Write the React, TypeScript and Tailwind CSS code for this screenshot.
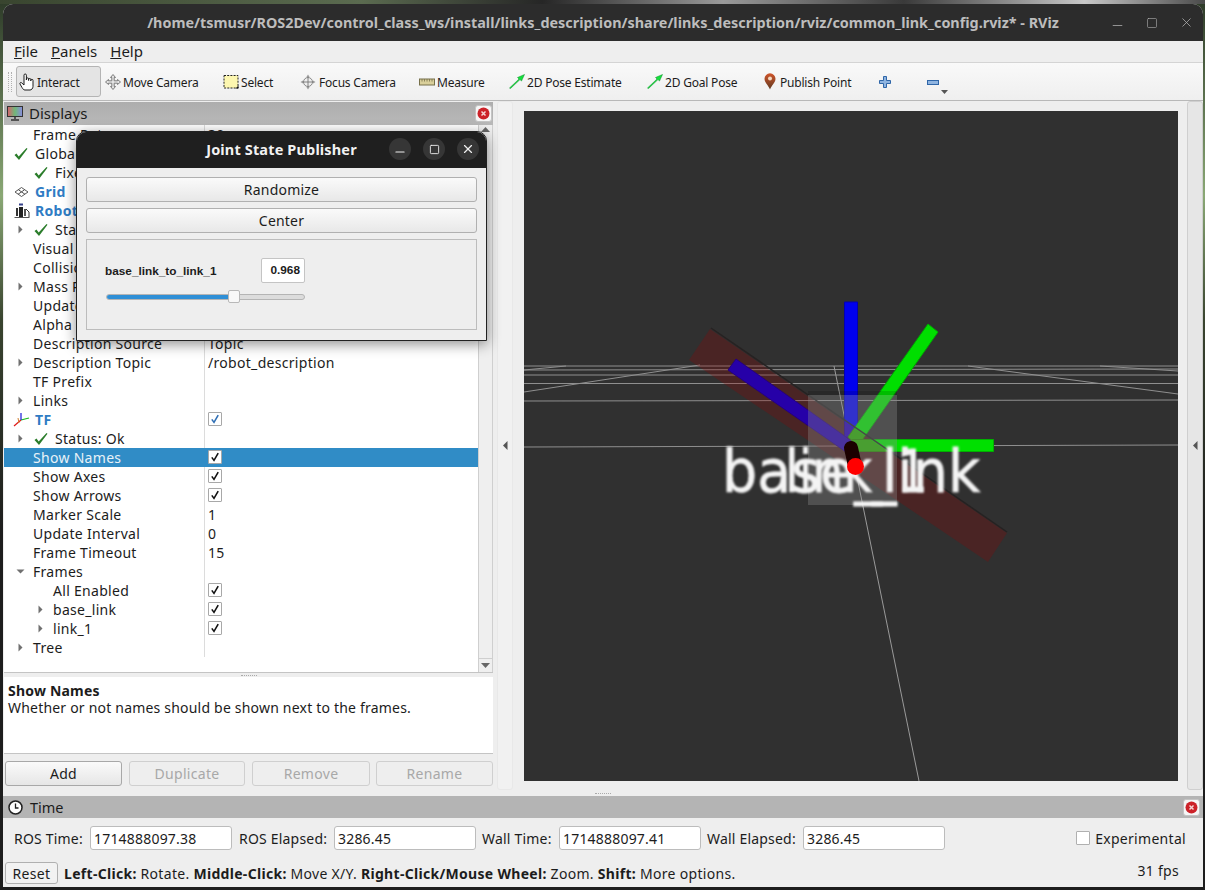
import type { ReactNode } from "react";
import { Minus, Square, X } from "lucide-react";

const ui = "font-['Noto_Sans',sans-serif]";

const Arrow = ({ down = false }: { down?: boolean }) => (
  <svg width="9" height="9" viewBox="0 0 9 9" className="shrink-0">
    {down ? <path d="M0.5 2.5h8l-4 4z" fill="#707070" /> : <path d="M2.5 0.5v8l4-4z" fill="#707070" />}
  </svg>
);

const GreenCheck = () => (
  <svg width="14" height="14" viewBox="0 0 14 14" className="shrink-0">
    <path d="M0.5 8l2-1.5 2.2 3L12.5 1l1 .8L5 13z" fill="#2b7d2b" />
  </svg>
);

const Box = ({ color = "#111111" }: { color?: string }) => (
  <span className="mb-[1px] flex h-[14px] w-[14px] items-center justify-center rounded-[1px] border border-[#a8a8a8] bg-white">
    <svg width="10" height="10" viewBox="0 0 10 10">
      <path d="M1.8 5.4l2.2 3L8.2 1.2" fill="none" stroke={color} strokeWidth="1.6" />
    </svg>
  </span>
);

const GridIcon = () => (
  <svg width="15" height="12" viewBox="0 0 15 12" className="shrink-0">
    <path d="M7.5 1.5L14 6l-6.5 4.5L1 6zM4.5 3.8l6.5 4.5M10.5 3.8L4 8.3" fill="none" stroke="#555" strokeWidth="1" />
  </svg>
);

const RobotIcon = () => (
  <svg width="16" height="15" viewBox="0 0 16 15" className="shrink-0">
    <rect x="5" y="0.5" width="4" height="2" fill="#35408a" />
    <rect x="2" y="5" width="2" height="8" fill="#333" />
    <rect x="5" y="4" width="4" height="10" fill="#222" />
    <rect x="10" y="6" width="2" height="7" fill="#555" />
    <path d="M0.5 14.5h15" stroke="#555" strokeWidth="1" />
    <path d="M12 6l3 3v5" fill="none" stroke="#333" strokeWidth="1" />
  </svg>
);

const TfIcon = () => (
  <svg width="17" height="15" viewBox="0 0 17 15" className="shrink-0">
    <path d="M8 8L1 14" stroke="#e01818" strokeWidth="1.2" />
    <path d="M8 8L16 6" stroke="#18b818" strokeWidth="1.2" />
    <path d="M8 8V1" stroke="#1818d8" strokeWidth="1.2" />
    <path d="M5 6l1 5" stroke="#d08030" strokeWidth="1" />
  </svg>
);

type Row = {
  name: string;
  value?: string;
  pad: string;
  arrow?: "right" | "down";
  check?: boolean;
  icon?: "grid" | "robot" | "tf";
  box?: "black" | "blue";
  head?: boolean;
  selected?: boolean;
};

const rows: Row[] = [
  { name: "Frame Rate", value: "30", pad: "pl-[29px]" },
  { name: "Global Options", pad: "pl-[10px]", check: true },
  { name: "Fixed Frame", value: "map", pad: "pl-[30px]", check: true },
  { name: "Grid", pad: "pl-[10px]", icon: "grid", head: true },
  { name: "RobotModel", pad: "pl-[10px]", icon: "robot", head: true },
  { name: "Status: Ok", pad: "pl-[12px]", arrow: "right", check: true },
  { name: "Visual Enabled", pad: "pl-[29px]" },
  { name: "Collision Enabled", pad: "pl-[29px]" },
  { name: "Mass Properties", pad: "pl-[12px]", arrow: "right" },
  { name: "Update Interval", value: "0", pad: "pl-[29px]" },
  { name: "Alpha", value: "1", pad: "pl-[29px]" },
  { name: "Description Source", value: "Topic", pad: "pl-[29px]" },
  { name: "Description Topic", value: "/robot_description", pad: "pl-[12px]", arrow: "right" },
  { name: "TF Prefix", pad: "pl-[29px]" },
  { name: "Links", pad: "pl-[12px]", arrow: "right" },
  { name: "TF", pad: "pl-[9px]", icon: "tf", head: true, box: "blue" },
  { name: "Status: Ok", pad: "pl-[12px]", arrow: "right", check: true },
  { name: "Show Names", pad: "pl-[29px]", box: "black", selected: true },
  { name: "Show Axes", pad: "pl-[29px]", box: "black" },
  { name: "Show Arrows", pad: "pl-[29px]", box: "black" },
  { name: "Marker Scale", value: "1", pad: "pl-[29px]" },
  { name: "Update Interval", value: "0", pad: "pl-[29px]" },
  { name: "Frame Timeout", value: "15", pad: "pl-[29px]" },
  { name: "Frames", pad: "pl-[12px]", arrow: "down" },
  { name: "All Enabled", pad: "pl-[49px]", box: "black" },
  { name: "base_link", pad: "pl-[32px]", arrow: "right", box: "black" },
  { name: "link_1", pad: "pl-[32px]", arrow: "right", box: "black" },
  { name: "Tree", pad: "pl-[12px]", arrow: "right" },
];

const TreeRow = ({ row }: { row: Row }) => (
  <div className={`flex h-[19px] text-[14px] leading-[19px] tracking-[0.3px] ${row.selected ? "bg-[#308cc6] text-[#e8f2f8]" : "text-[#1c1c1c]"}`}>
    <div className={`flex w-[201px] shrink-0 items-center overflow-hidden whitespace-nowrap border-r ${row.pad} ${row.selected ? "border-[#308cc6]" : "border-[#dcdcdc]"}`}>
      {row.arrow && (
        <span className="mr-[8px]">
          <Arrow down={row.arrow === "down"} />
        </span>
      )}
      {row.check && (
        <span className={`mr-[7px] ${row.arrow ? "ml-[1px]" : ""}`}>
          <GreenCheck />
        </span>
      )}
      {row.icon === "grid" && <span className="mr-[6px]"><GridIcon /></span>}
      {row.icon === "robot" && <span className="mr-[5px]"><RobotIcon /></span>}
      {row.icon === "tf" && <span className="mr-[5px]"><TfIcon /></span>}
      <span className={row.head ? "font-bold text-[#2f7cc4]" : ""}>{row.name}</span>
    </div>
    <div className="flex flex-1 items-center pl-[3px]">
      {row.box ? <Box color={row.box === "blue" ? "#2f6fb5" : "#111111"} /> : row.value}
    </div>
  </div>
);

const HandIcon = () => (
  <svg width="16" height="18" viewBox="0 0 16 18" className="shrink-0">
    <path
      d="M5 10V2.2a1.2 1.2 0 0 1 2.4 0V7V6a1.1 1.1 0 0 1 2.2 0v1.5-.9a1.1 1.1 0 0 1 2.2 0V8v-.6a1.1 1.1 0 0 1 2.2 0v6c0 2-1.5 3.600-3 3.600H6c-1.5 0-2-1-3-2.500L1 11c-.6-1 .8-2 1.600-1.200L5 12z"
      fill="#ffffff"
      stroke="#1c1c1c"
      strokeWidth="1"
    />
  </svg>
);

const MoveIcon = () => (
  <svg width="16" height="16" viewBox="0 0 16 16" className="shrink-0">
    <path d="M8 .5l2.500 3H9.200v3.300h3.300V5.500l3 2.500-3 2.500V9.200H9.200v3.300h1.300L8 15.500l-2.500-3h1.300V9.200H3.500v1.300L.5 8l3-2.500v1.300h3.300V3.500H5.500z" fill="#e4e4e4" stroke="#6f6f6f" strokeWidth=".9" />
  </svg>
);

const SelectIcon = () => (
  <svg width="16" height="16" viewBox="0 0 16 16" className="shrink-0">
    <rect x="1" y="1.500" width="14" height="12.500" fill="#fdf7b0" stroke="#222" strokeWidth="1" strokeDasharray="2 1.200" />
    <path d="M15.500 11.500v3h-3z" fill="#111" />
  </svg>
);

const FocusIcon = () => (
  <svg width="16" height="16" viewBox="0 0 16 16" className="shrink-0">
    <path d="M8 .5l1.600 2.500H6.400zM8 15.500l-1.600-2.500h3.200zM.5 8L3 6.400v3.200zM15.500 8L13 9.600V6.400z" fill="#9a9a9a" />
    <circle cx="8" cy="8" r="4.500" fill="#eeeeee" stroke="#8a8a8a" strokeWidth="1" />
    <path d="M8 3v10M3 8h10" stroke="#777" strokeWidth=".9" />
  </svg>
);

const RulerIcon = () => (
  <svg width="16" height="8" viewBox="0 0 16 8" className="shrink-0">
    <rect x=".5" y="1" width="15" height="6" fill="#d9cf9a" stroke="#77704a" strokeWidth="1" />
    <path d="M3 1v2.500M5.500 1v2.500M8 1v2.500M10.500 1v2.500M13 1v2.500" stroke="#77704a" strokeWidth=".8" />
  </svg>
);

const PoseIcon = () => (
  <svg width="16" height="15" viewBox="0 0 16 15" className="shrink-0">
    <path d="M.5 14L10 5 8.500 3.500 15.500 .5 12.500 7 11 5.600 1.500 14.500z" fill="#14e03c" stroke="#0c8f28" strokeWidth=".5" />
  </svg>
);

const PinIcon = () => (
  <svg width="12" height="17" viewBox="0 0 12 17" className="shrink-0">
    <defs>
      <linearGradient id="pin" x1="0" x2="0" y1="0" y2="1">
        <stop offset="0" stopColor="#d0552a" />
        <stop offset="1" stopColor="#5f3a22" />
      </linearGradient>
    </defs>
    <path d="M6 16.500C4.500 12.500.5 9.800.5 5.800a5.500 5.500 0 0 1 11 0c0 4-4 6.700-5.500 10.700z" fill="url(#pin)" />
    <circle cx="6" cy="5.500" r="2" fill="#f4d8c0" />
  </svg>
);

const PlusIcon = () => (
  <svg width="12" height="12" viewBox="0 0 12 12" className="block">
    <path d="M4.500 .5h3v4h4v3h-4v4h-3v-4h-4v-3h4z" fill="#8fb4e0" stroke="#2f66a8" strokeWidth="1" />
  </svg>
);

const MinusIcon = () => (
  <svg width="12" height="5" viewBox="0 0 12 5" className="block">
    <rect x=".5" y=".5" width="11" height="4" fill="#8fb4e0" stroke="#2f66a8" strokeWidth="1" />
  </svg>
);

const CloseBadge = () => (
  <span className="flex h-[17px] w-[17px] items-center justify-center rounded-[3px] border border-[#c4c4c4] bg-[#f6f6f6]">
    <svg width="13" height="13" viewBox="0 0 13 13">
      <circle cx="6.500" cy="6.500" r="6" fill="#cc2229" />
      <path d="M4.500 4.500l4 4M8.500 4.500l-4 4" stroke="#f6d6d6" strokeWidth="1.500" />
    </svg>
  </span>
);

const Tool = ({ cls, label, children }: { cls: string; label: string; children: ReactNode }) => (
  <div className={`flex h-[31px] items-center whitespace-nowrap text-[12px] tracking-[-0.2px] text-[#1c1c1c] ${cls}`}>
    {children}
    <span className="pt-[2px]">{label}</span>
  </div>
);

const Field = ({ label, value, cls }: { label: string; value: string; cls: string }) => (
  <>
    <span className={`whitespace-nowrap ${cls}`}>{label}</span>
    <span className="flex h-[24px] w-[142px] shrink-0 items-center rounded-[3px] border border-[#bcbcbc] bg-white pl-[3px]">{value}</span>
  </>
);

const Handle = ({ cls }: { cls: string }) => (
  <div className={`flex h-full w-[16px] shrink-0 items-center justify-center rounded-[3px] border ${cls}`}>
    <svg width="5" height="9" viewBox="0 0 5 9">
      <path d="M4.500 0v9L0 4.500z" fill="#555" />
    </svg>
  </div>
);

const Viewport = () => (
  <svg viewBox="524 111 654 670" className="h-full w-full bg-[#303030]">
    <defs>
      <filter id="soft">
        <feGaussianBlur stdDeviation="0.9" />
      </filter>
    </defs>
    {/* grid */}
    <g stroke="#8f8f8f" strokeWidth="1" fill="none">
      <path d="M524 366H1178M524 370L1178 369M524 375H1178M524 383.500H1178M524 401L1178 400M524 447L1178 445" />
      <path d="M524 392L700 365M524 370L566 366M968 366L1178 394M1100 366L1178 371" />
      <path d="M834 366L845 420M855 467L919 781" stroke="#9a9a9a" />
    </g>
    {/* axes */}
    <path d="M844.500 302h13v135h-13z" fill="#0000ee" stroke="#0000b0" strokeWidth="1" />
    <path d="M736 359L853 442 846 452 728 370z" fill="#0000e0" stroke="#0000a8" strokeWidth="1" />
    <path d="M928 324L938 332 858 446 848 437z" fill="#00de00" stroke="#00a800" strokeWidth="1" />
    <path d="M852 439.500H993.500V451.500H852z" fill="#00e000" stroke="#00b000" strokeWidth="1" />
    {/* link box */}
    <path d="M710 329L1007 533 988 562 689 360z" fill="#980000" fillOpacity="0.25" />
    <path d="M711 328L1007 532" stroke="#262222" strokeWidth="1.500" fill="none" />
    {/* text plate */}
    <rect x="808" y="391" width="89" height="4" fill="#000000" fillOpacity="0.15" />
    <rect x="808" y="395" width="89" height="110" fill="#8c8c8c" fillOpacity="0.35" />
    <g filter="url(#soft)" fill="#f4f4f4" stroke="#f4f4f4" strokeWidth="0.8" fontFamily="'DejaVu Sans',sans-serif" fontSize="58">
      <text x="722" y="492" textLength="258" lengthAdjust="spacingAndGlyphs">base_link</text>
      <text x="785" y="492" textLength="143" lengthAdjust="spacingAndGlyphs">link_1</text>
    </g>
    <path d="M851 448L855 466" stroke="#1b0000" strokeWidth="14" strokeLinecap="round" />
    <circle cx="855.500" cy="466.500" r="8.500" fill="#ff0000" />
  </svg>
);

export default function App() {
  return (
    <div className={`${ui} relative flex h-[890px] w-[1205px] flex-col overflow-hidden bg-[linear-gradient(180deg,#2d3a28_0%,#8aa875_22%,#39442f_36%,#1d1d1d_60%,#1d1d1d_100%)]`}>
      <div className="h-[4px] shrink-0 bg-[linear-gradient(90deg,#39452f_0%,#5b6b50_30%,#262626_45%,#9a9a9a_60%,#3a3a3a_75%,#c8c8c8_90%,#4a4a4a_100%)]" />
      <div className="ml-[3px] flex w-[1200px] flex-col overflow-hidden rounded-t-[10px] bg-[#eeeeee]">
        {/* title bar */}
        <div className="relative flex h-[37px] shrink-0 items-center justify-center bg-[#2c2c2c] text-[14.4px] font-bold text-[#bdbdbd]">
          <span className="whitespace-nowrap">/home/tsmusr/ROS2Dev/control_class_ws/install/links_description/share/links_description/rviz/common_link_config.rviz* - RViz</span>
          <div className="absolute right-[9px] top-[11px] flex items-center gap-[21px] text-[#b4b4b4]">
            <Minus size={15} strokeWidth={1.2} className="translate-y-[3px]" />
            <Square size={12} strokeWidth={1.2} />
            <X size={15} strokeWidth={1.2} />
          </div>
        </div>

        {/* menu bar */}
        <div className="flex h-[22px] shrink-0 items-center gap-[13px] border-b border-[#d4d4d4] pl-[11px] text-[15px] text-[#1c1c1c]">
          <span><span className="underline">F</span>ile</span>
          <span><span className="underline">P</span>anels</span>
          <span><span className="underline">H</span>elp</span>
        </div>

        {/* toolbar */}
        <div className="flex h-[38px] shrink-0 items-center border-b border-[#b8b8b8] bg-[linear-gradient(180deg,#f9f9f9,#efefef)]">
          <div className="ml-[5px] h-[20px] w-[4px] border-x border-dotted border-[#b0b0b0]" />
          <Tool cls="ml-[4px] w-[85px] gap-[2px] rounded-[3px] border border-[#b4b4b4] bg-[#e4e4e4] pl-[2px]" label="Interact"><HandIcon /></Tool>
          <Tool cls="ml-[4px] w-[92px] gap-[2px]" label="Move Camera"><MoveIcon /></Tool>
          <Tool cls="ml-[26px] w-[51px] gap-[2px]" label="Select"><SelectIcon /></Tool>
          <Tool cls="ml-[26px] w-[94px] gap-[3px]" label="Focus Camera"><FocusIcon /></Tool>
          <Tool cls="ml-[25px] w-[64px] gap-[2px]" label="Measure"><RulerIcon /></Tool>
          <Tool cls="ml-[26px] w-[113px] gap-[2px]" label="2D Pose Estimate"><PoseIcon /></Tool>
          <Tool cls="ml-[25px] w-[89px] gap-[2px]" label="2D Goal Pose"><PoseIcon /></Tool>
          <Tool cls="ml-[28px] w-[87px] gap-[4px]" label="Publish Point"><PinIcon /></Tool>
          <div className="ml-[28px]"><PlusIcon /></div>
          <div className="relative ml-[36px] h-[12px] w-[12px] pt-[4px]">
            <MinusIcon />
            <svg width="7" height="4" viewBox="0 0 7 4" className="absolute left-[14px] top-[14px]">
              <path d="M0 0h7L3.500 4z" fill="#555" />
            </svg>
          </div>
        </div>

        {/* main */}
        <div className="flex h-[689px] shrink-0">
          <div className="ml-[1px] flex w-[489px] shrink-0 flex-col">
            <div className="mt-[1px] flex h-[23px] shrink-0 items-center justify-between bg-[linear-gradient(180deg,#adadad,#b9b9b9)] pl-[3px] pr-[1px] text-[15px] text-[#1c1c1c]">
              <span className="flex items-center gap-[6px]">
                <svg width="16" height="15" viewBox="0 0 16 15">
                  <defs>
                    <linearGradient id="mon" x1="0" x2="1">
                      <stop offset="0" stopColor="#d8606c" />
                      <stop offset="0.5" stopColor="#70b878" />
                      <stop offset="1" stopColor="#8a8ae0" />
                    </linearGradient>
                  </defs>
                  <rect x=".5" y=".5" width="15" height="10" fill="url(#mon)" stroke="#333" />
                  <path d="M8 11v2M4 14h8" stroke="#333" strokeWidth="1.500" />
                </svg>
                Displays
              </span>
              <CloseBadge />
            </div>

            <div className="flex h-[547px] shrink-0 bg-white">
              <div className="h-full w-[474px] shrink-0 overflow-hidden">
                {rows.map((row, i) => (
                  <TreeRow key={i} row={row} />
                ))}
              </div>
              <div className="flex h-full flex-1 flex-col items-center justify-between border-x border-[#cfcfcf] bg-[#efefef] pt-[2px]">
                <svg width="9" height="5" viewBox="0 0 9 5"><path d="M0 5h9L4.500 0z" fill="#666" /></svg>
                <div className="flex h-[14px] w-full items-center justify-center border-t border-[#cfcfcf]">
                  <svg width="9" height="5" viewBox="0 0 9 5"><path d="M0 0h9L4.500 5z" fill="#666" /></svg>
                </div>
              </div>
            </div>

            <div className="flex h-[5px] shrink-0 items-center justify-center border-t border-[#c4c4c4]">
              <div className="w-[16px] border-t border-dotted border-[#aaaaaa]" />
            </div>

            <div className="h-[77px] shrink-0 border-b border-[#c4c4c4] bg-white px-[4px] pt-[5px] text-[14px] leading-[17px] tracking-[0.2px] text-[#1c1c1c]">
              <div className="font-bold">Show Names</div>
              <div>Whether or not names should be shown next to the frames.</div>
            </div>

            <div className="mt-[7px] flex h-[25px] pl-[1px] text-[14px] tracking-[0.3px]">
              <button className="w-[117px] rounded-[3px] border border-[#a8a8a8] bg-[linear-gradient(180deg,#fafafa,#e6e6e6)] text-[#1c1c1c]">Add</button>
              <button className="ml-[7px] w-[116px] rounded-[3px] border border-[#cfcfcf] bg-[#eeeeee] text-[#a8a8a8]">Duplicate</button>
              <button className="ml-[7px] w-[118px] rounded-[3px] border border-[#cfcfcf] bg-[#eeeeee] text-[#a8a8a8]">Remove</button>
              <button className="ml-[6px] w-[117px] rounded-[3px] border border-[#cfcfcf] bg-[#eeeeee] text-[#a8a8a8]">Rename</button>
            </div>
          </div>

          <div className="ml-[4px] h-full"><Handle cls="border-[#e8e8e8] bg-[#f1f1f1]" /></div>
          <div className="ml-[11px] mt-[10px] h-[670px] w-[654px] shrink-0"><Viewport /></div>
          <div className="ml-[9px] h-full"><Handle cls="border-[#cfcfcf] bg-[#e6e6e6]" /></div>
        </div>

        {/* splitter */}
        <div className="flex h-[6px] shrink-0 items-center justify-center">
          <div className="w-[16px] border-t border-dotted border-[#aaaaaa]" />
        </div>

        {/* time panel */}
        <div className="flex h-[22px] shrink-0 items-center justify-between bg-[#b4b4b4] pl-[5px] pr-[3px] text-[14.5px] text-[#1c1c1c]">
          <span className="flex items-center gap-[7px] pt-[1px]">
            <svg width="15" height="15" viewBox="0 0 15 15">
              <circle cx="7.500" cy="7.500" r="6.500" fill="#fff" stroke="#222" strokeWidth="1.500" />
              <path d="M7.500 3.500v4.500h3" fill="none" stroke="#222" strokeWidth="1.300" />
            </svg>
            Time
          </span>
          <CloseBadge />
        </div>
        <div className="mb-[12px] mt-[8px] flex h-[24px] shrink-0 items-center pl-[11px] pr-[17px] text-[14px] tracking-[0.2px] text-[#1c1c1c]">
          <Field label="ROS Time:" value="1714888097.38" cls="w-[76px]" />
          <Field label="ROS Elapsed:" value="3286.45" cls="ml-[7px] w-[95px]" />
          <Field label="Wall Time:" value="1714888097.41" cls="ml-[6px] w-[77px]" />
          <Field label="Wall Elapsed:" value="3286.45" cls="ml-[6px] w-[96px]" />
          <span className="ml-auto flex items-center gap-[5px] tracking-[0.3px]">
            <span className="h-[14px] w-[14px] rounded-[1px] border border-[#b0b0b0] bg-white" />
            Experimental
          </span>
        </div>
        <div className="mb-[3px] flex h-[22px] shrink-0 items-center pl-[2px] pr-[24px] text-[14px] tracking-[0.3px] text-[#1c1c1c]">
          <button className="h-[22px] w-[53px] rounded-[3px] border border-[#b0b0b0] bg-[#f2f2f2]">Reset</button>
          <span className="ml-[6px]">
            <b>Left-Click:</b> Rotate. <b>Middle-Click:</b> Move X/Y. <b>Right-Click/Mouse Wheel:</b> Zoom. <b>Shift:</b> More options.
          </span>
          <span className="ml-auto pb-[6px]">31 fps</span>
        </div>
      </div>

      {/* Joint State Publisher floating window */}
      <div className="absolute left-[76px] top-[131px] flex h-[210px] w-[411px] flex-col overflow-hidden rounded-t-[10px] border border-[#222222] bg-[#eeeeee] shadow-[0_3px_14px_rgba(0,0,0,0.45)]">
        <div className="relative flex h-[36px] shrink-0 items-center justify-center bg-[#1f1f1f] text-[14.5px] font-bold tracking-[0.15px] text-[#f2f2f2]">
          Joint State Publisher
          <div className="absolute right-[7px] top-[6px] flex gap-[12px]">
            <span className="flex h-[22px] w-[22px] items-center justify-center rounded-full bg-[#363636]"><Minus size={14} color="#eee" className="translate-y-[3px]" /></span>
            <span className="flex h-[22px] w-[22px] items-center justify-center rounded-full bg-[#363636]"><Square size={11} color="#eee" /></span>
            <span className="flex h-[22px] w-[22px] items-center justify-center rounded-full bg-[#363636]"><X size={14} color="#eee" /></span>
          </div>
        </div>
        <div className="flex flex-1 flex-col gap-[6px] px-[9px] pt-[9px] text-[14px] tracking-[0.2px] text-[#1c1c1c]">
          <button className="h-[25px] rounded-[3px] border border-[#b0b0b0] bg-[linear-gradient(180deg,#fafafa,#e8e8e8)]">Randomize</button>
          <button className="h-[25px] rounded-[3px] border border-[#b0b0b0] bg-[linear-gradient(180deg,#fafafa,#e8e8e8)]">Center</button>
          <div className="h-[91px] border border-[#bcbcbc] pl-[18px] pt-[18px] font-['Liberation_Sans',sans-serif] text-[11.8px] font-bold tracking-normal">
            <div className="flex w-[200px] items-center justify-between">
              <span className="pt-[2px]">base_link_to_link_1</span>
              <span className="flex h-[25px] w-[44px] items-center justify-end rounded-[2px] border border-[#c4c4c4] bg-white pr-[4px]">0.968</span>
            </div>
            <div className="relative ml-[1px] mt-[11px] h-[6px] w-[199px] rounded-full border border-[#b4b4b4] bg-[#dcdcdc]">
              <div className="h-full w-[126px] rounded-full bg-[#2f8fd6]" />
              <span className="absolute left-[121px] top-[-5px] h-[13px] w-[12px] rounded-[2px] border border-[#b8b8b8] bg-[#f8f8f8]" />
            </div>
          </div>
        </div>
      </div>
    </div>
  );
}
